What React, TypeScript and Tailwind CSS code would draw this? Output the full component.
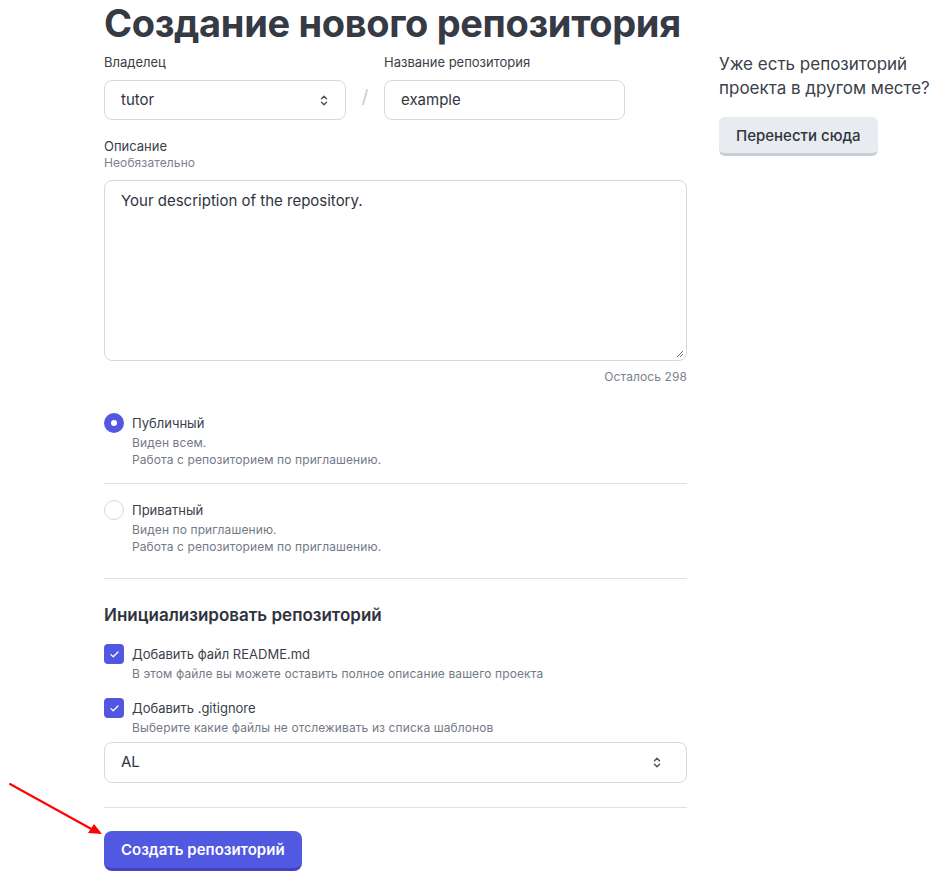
import React from "react";

const FONT = { fontFamily: "Inter, 'Noto Sans', sans-serif" };

function UpDown() {
  return (
    <svg width="8" height="11" viewBox="0 0 8 11" fill="none" stroke="#4b5563" strokeWidth="1.5" strokeLinecap="round" strokeLinejoin="round">
      <path d="M1.5 3.8L4 1.3l2.5 2.5" />
      <path d="M1.5 7.2L4 9.7l2.5-2.5" />
    </svg>
  );
}

function Check() {
  return (
    <span className="flex h-5 w-5 shrink-0 items-center justify-center rounded-[4px] bg-[#5157e0]">
      <svg width="9" height="7" viewBox="0 0 9 7" fill="none" stroke="#fff" strokeWidth="1.3" strokeLinecap="round" strokeLinejoin="round">
        <path d="M1 3.6l2.2 2.1L8 1" />
      </svg>
    </span>
  );
}

function Radio({ on, title, lines }: { on?: boolean; title: string; lines: string[] }) {
  return (
    <div className="flex gap-2">
      {on ? (
        <span className="mt-[1px] flex h-5 w-5 shrink-0 items-center justify-center rounded-full bg-[#5157e0]">
          <span className="h-[6px] w-[6px] rounded-full bg-white" />
        </span>
      ) : (
        <span className="mt-[1px] h-5 w-5 shrink-0 rounded-full border border-[#d5d9e0] bg-white" />
      )}
      <div>
        <div className="text-[13px] leading-[22px] text-[#3a3f4a]">{title}</div>
        {lines.map((l) => (
          <div key={l} className="text-[12px] leading-[17px] tracking-[0.1px] text-[#737a86]">{l}</div>
        ))}
      </div>
    </div>
  );
}

function CheckRow({ title, desc }: { title: string; desc: string }) {
  return (
    <div className="flex gap-2">
      <Check />
      <div>
        <div className="text-[13px] leading-[20px] text-[#3a3f4a]">{title}</div>
        <div className="text-[12px] leading-[20px] tracking-[0.1px] text-[#737a86]">{desc}</div>
      </div>
    </div>
  );
}

export default function App() {
  return (
    <div className="relative min-h-[884px] w-[945px] overflow-hidden bg-white" style={FONT}>
      <div className="flex gap-8 pl-[104px]">
        {/* Left: form */}
        <div className="w-[583px]">
          <h1 className="mt-[3px] whitespace-nowrap text-[38px] font-bold leading-[40px] tracking-[-0.35px] text-[#353a45]">
            Создание нового репозитория
          </h1>

          <div className="mt-[9px] flex items-end">
            <div>
              <div className="text-[13px] leading-[20px] text-[#3a3f4a]">Владелец</div>
              <div className="mt-[8px] flex h-10 w-[242px] items-center justify-between rounded-lg border border-[#d5d9e0] pl-4 pr-[17px] text-[15px] text-[#2f343e]">
                tutor
                <UpDown />
              </div>
            </div>
            <div className="flex h-10 w-[38px] items-center justify-center pb-[8px] text-[18px] text-[#c4cad3]">/</div>
            <div>
              <div className="text-[13px] leading-[20px] text-[#3a3f4a]">Название репозитория</div>
              <div className="mt-[8px] flex h-10 w-[241px] items-center rounded-lg border border-[#d5d9e0] pl-4 text-[15px] text-[#2f343e]">
                example
              </div>
            </div>
          </div>

          <div className="mt-[16px] text-[13px] leading-[20px] text-[#3a3f4a]">Описание</div>
          <div className="text-[12px] leading-[14px] tracking-[0.1px] text-[#7b818c]">Необязательно</div>
          <div className="relative mt-[10px] h-[181px] rounded-lg border border-[#d5d9e0] px-4 py-[10px] text-[15px] leading-[20px] text-[#2f343e]">
            Your description of the repository.
            <svg className="absolute bottom-[2px] right-[2px]" width="8" height="8" viewBox="0 0 8 8" stroke="#6b7280" strokeWidth="1">
              <path d="M7 1L1 7M7 4L4 7" />
            </svg>
          </div>
          <div className="mt-[6px] text-right text-[12px] leading-[20px] tracking-[0.1px] text-[#7b818c]">Осталось 298</div>

          <div className="mt-[25px] pb-[15px]">
            <Radio on title="Публичный" lines={["Виден всем.", "Работа с репозиторием по приглашению."]} />
          </div>
          <div className="border-t border-[#dde1e6] pb-[23px] pt-[15px]">
            <Radio title="Приватный" lines={["Виден по приглашению.", "Работа с репозиторием по приглашению."]} />
          </div>
          <div className="border-t border-[#dde1e6] pt-[24px]">
            <h2 className="text-[17px] font-semibold leading-[24px] text-[#2f343e]">Инициализировать репозиторий</h2>
            <div className="mt-[17px] flex flex-col gap-[14px]">
              <CheckRow title="Добавить файл README.md" desc="В этом файле вы можете оставить полное описание вашего проекта" />
              <CheckRow title="Добавить .gitignore" desc="Выберите какие файлы не отслеживать из списка шаблонов" />
            </div>
            <div className="mt-[4px] flex h-[41px] items-center justify-between rounded-lg border border-[#d5d9e0] pl-4 pr-[25px] text-[15px] text-[#2f343e]">
              AL
              <UpDown />
            </div>
          </div>
          <div className="mt-[24px] border-t border-[#dde1e6] pt-[23px]">
            <button className="h-10 rounded-lg border-b-[3px] border-[#4640c4] bg-[#5159e0] px-[17px] pt-[2px] text-[15px] font-semibold text-white">
              Создать репозиторий
            </button>
          </div>
        </div>

        {/* Right: migrate */}
        <div className="pt-[52px]">
          <p className="text-[17px] leading-[24px] text-[#3a3f4a]">
            Уже есть репозиторий
            <br />
            проекта в другом месте?
          </p>
          <button className="mt-[17px] h-[39px] rounded-md border-b-[3px] border-[#c9ced6] bg-[#e8ebef] px-[17px] pt-[2px] text-[15px] font-medium text-[#2f343e]">
            Перенести сюда
          </button>
        </div>
      </div>

      {/* annotation arrow */}
      <svg className="absolute left-0 top-[775px]" width="110" height="65" viewBox="0 0 110 65" fill="none">
        <path d="M10 9L95 56" stroke="#f00" strokeWidth="2" strokeLinecap="round" />
        <path d="M102 59L88 58L94 49Z" fill="#f00" />
      </svg>
    </div>
  );
}
